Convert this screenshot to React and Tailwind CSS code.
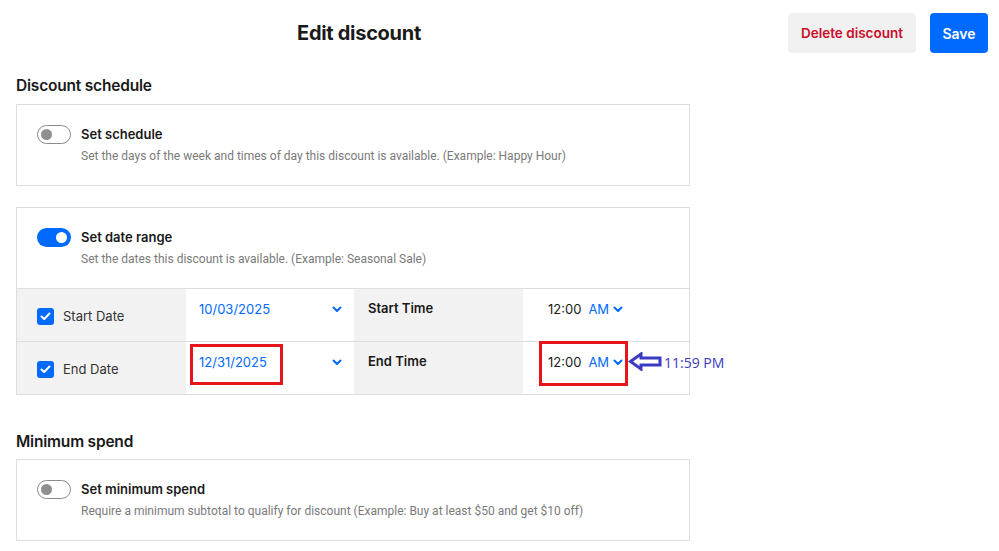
import React from 'react'

const font = { fontFamily: 'Inter, "Liberation Sans", sans-serif' }

function Toggle({ on }) {
  return on ? (
    <div className="w-[34px] h-[19px] rounded-full bg-[#006aff] flex items-center justify-end pr-[4px] shrink-0">
      <div className="w-[11px] h-[11px] rounded-full bg-white" />
    </div>
  ) : (
    <div className="w-[34px] h-[19px] rounded-full border-[1.5px] border-[#8a8a8a] bg-white flex items-center pl-[3px] shrink-0">
      <div className="w-[11px] h-[11px] rounded-full bg-[#8f8f8f]" />
    </div>
  )
}

function Chevron() {
  return (
    <svg width="10" height="7" viewBox="0 0 10 7" className="shrink-0">
      <polyline points="1.5,1.5 5,5 8.5,1.5" fill="none" stroke="#006aff" strokeWidth="2" strokeLinecap="round" strokeLinejoin="round" />
    </svg>
  )
}

function Checkbox() {
  return (
    <div className="w-[17px] h-[17px] rounded-[3px] bg-[#006aff] flex items-center justify-center shrink-0">
      <svg width="11" height="9" viewBox="0 0 11 9">
        <polyline points="1.5,4.5 4.2,7 9.5,1.5" fill="none" stroke="white" strokeWidth="2" strokeLinecap="round" strokeLinejoin="round" />
      </svg>
    </div>
  )
}

function ToggleHeader({ on, title, desc }) {
  return (
    <div className="flex items-start gap-[10px] px-5 py-5">
      <Toggle on={on} />
      <div className="flex flex-col gap-[4px]">
        <div className="text-[13px] leading-[18px] font-semibold text-[#1a1a1a]">{title}</div>
        <div className="text-[12px] leading-[18px] text-[#7a7a7a]" style={{ fontFamily: 'Roboto, "Liberation Sans", sans-serif' }}>{desc}</div>
      </div>
    </div>
  )
}

function Arrow() {
  return (
    <svg width="34" height="19" viewBox="0 0 34 19">
      <polygon points="2.5,9.5 13,2 13,6 32,6 32,13 13,13 13,17" fill="white" stroke="#3a3ac4" strokeWidth="3" strokeLinejoin="miter" />
    </svg>
  )
}

function DateRow({ label, date, timeLabel, highlight }) {
  return (
    <div className="grid grid-cols-[169px_168px_169px_1fr] h-[53px] border-t border-[#dedede]">
      <div className="bg-[#f2f2f2] flex items-center gap-[9px] pl-5 pt-[2px]">
        <Checkbox />
        <div className="text-[13px] leading-[18px] text-[#333]">{label}</div>
      </div>
      <div className="relative bg-white flex items-start justify-between pl-[13px] pr-[12px] pt-[11px]">
        <div className="text-[13px] leading-[18px] text-[#006aff]">{date}</div>
        <div className="pt-[6px]"><Chevron /></div>
        {highlight && (
          <div className="absolute left-[4px] top-[2px] w-[93px] h-[41px] border-[3px] border-[#e8141c]" />
        )}
      </div>
      <div className="bg-[#f2f2f2] pl-[14px] pt-[10px]">
        <div className="text-[13px] leading-[18px] font-semibold text-[#1a1a1a]">{timeLabel}</div>
      </div>
      <div className="relative bg-white flex items-start pl-[25px] pt-[11px] gap-[7px]">
        <div className="text-[13px] leading-[18px] text-[#1a1a1a]">12:00</div>
        <div className="text-[13px] leading-[18px] text-[#006aff]">AM</div>
        <div className="pt-[6px] -ml-[3px]"><Chevron /></div>
        {highlight && (
          <>
            <div className="absolute left-[16px] -top-[1px] w-[89px] h-[45px] border-[3px] border-[#e8141c]" />
            <div className="absolute left-[105px] top-[9px] flex items-center gap-[2px] whitespace-nowrap">
              <Arrow />
              <div className="text-[14px] leading-[18px] pt-[3px] text-[#3a3ac4]" style={{ fontFamily: '"Open Sans", "Liberation Sans", sans-serif' }}>11:59 PM</div>
            </div>
          </>
        )}
      </div>
    </div>
  )
}

export default function App() {
  return (
    <div className="w-[999px] h-[551px] bg-white overflow-hidden" style={font}>
      <header className="flex items-center pt-[13px] pr-[11px]">
        <div className="w-[718px] flex justify-center">
          <h1 className="text-[20px] font-bold text-[#1a1a1a] tracking-[-0.3px]">Edit discount</h1>
        </div>
        <div className="flex-1 flex justify-end gap-[14px]">
          <button className="h-[40px] w-[128px] rounded-[4px] bg-[#f1f1f1] text-[#cc0c2a] text-[13.5px] font-semibold">Delete discount</button>
          <button className="h-[40px] w-[58px] rounded-[4px] bg-[#006aff] text-white text-[14px] font-semibold">Save</button>
        </div>
      </header>

      <main className="pl-4 w-[690px]">
        <h2 className="mt-[23px] text-[15.5px] leading-[20px] font-semibold text-[#1a1a1a] tracking-[-0.2px]">Discount schedule</h2>
        <section className="mt-[8px] border border-[#dedede]">
          <ToggleHeader on={false} title="Set schedule" desc="Set the days of the week and times of day this discount is available. (Example: Happy Hour)" />
        </section>

        <section className="mt-[21px] border border-[#dedede]">
          <ToggleHeader on title="Set date range" desc="Set the dates this discount is available. (Example: Seasonal Sale)" />
          <DateRow label="Start Date" date="10/03/2025" timeLabel="Start Time" />
          <DateRow label="End Date" date="12/31/2025" timeLabel="End Time" highlight />
        </section>

        <h2 className="mt-[37px] text-[15.5px] leading-[20px] font-semibold text-[#1a1a1a] tracking-[-0.2px]">Minimum spend</h2>
        <section className="mt-[7px] border border-[#dedede]">
          <ToggleHeader on={false} title="Set minimum spend" desc="Require a minimum subtotal to qualify for discount (Example: Buy at least $50 and get $10 off)" />
        </section>
      </main>
    </div>
  )
}
